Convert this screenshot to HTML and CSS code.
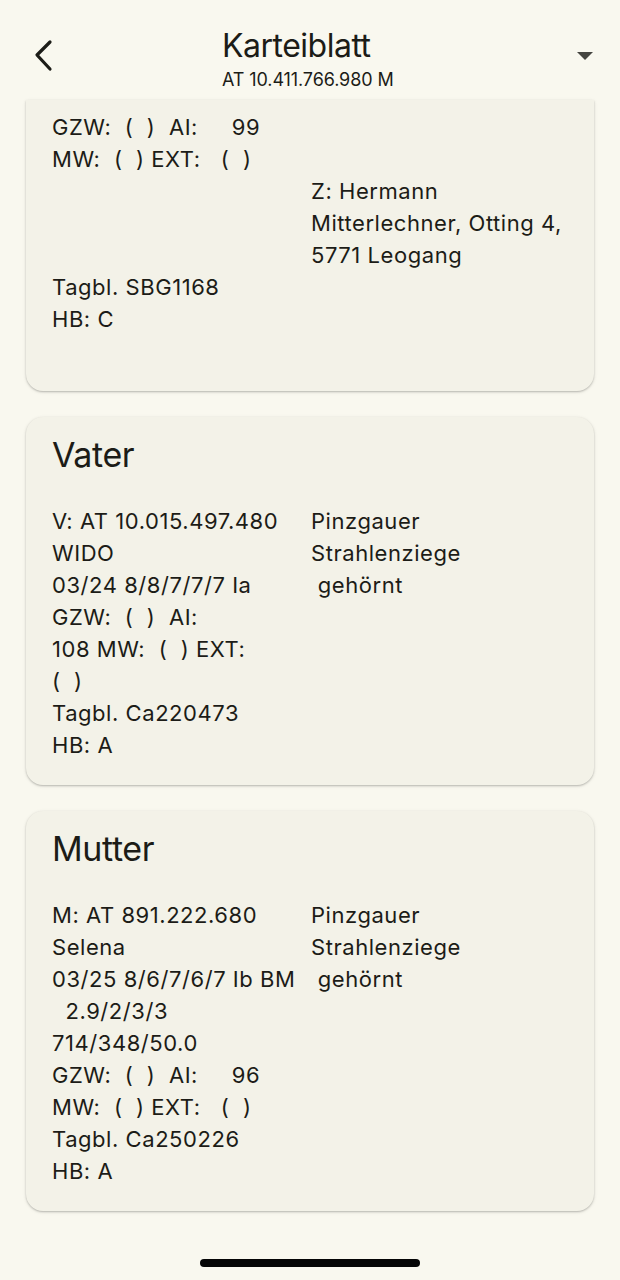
FILE: index.html
```html
<!DOCTYPE html>
<html lang="de">
<head>
<meta charset="utf-8">
<title>Karteiblatt</title>
<link rel="stylesheet" href="styles.css">
</head>
<body>
<div class="screen">
  <header class="appbar">
    <button class="back" aria-label="Zurück">
      <svg width="24" height="34" viewBox="0 0 24 34"><path d="M17 3 L4 16 L17 30" fill="none" stroke="#1c1c17" stroke-width="3.2" stroke-linecap="round" stroke-linejoin="round"/></svg>
    </button>
    <div class="titles">
      <div class="title">Karteiblatt</div>
      <div class="subtitle">AT 10.411.766.980 M</div>
    </div>
    <div class="dropdown" aria-label="Menü">
      <svg width="18" height="10" viewBox="0 0 18 10"><path d="M1 1 H17 L9 9 Z" fill="#454540"/></svg>
    </div>
  </header>

  <main class="list">
    <section class="card card-clipped">
      <div class="cols">
        <div class="col-left">
          <span class="ln">GZW:  (  )  AI:     99</span>
          <span class="ln">MW:  (  ) EXT:   (  )</span>
        </div>
        <div class="col-right"></div>
      </div>
      <div class="cols">
        <div class="col-left"></div>
        <div class="col-right">
          <span class="ln">Z: Hermann</span>
          <span class="ln">Mitterlechner, Otting 4,</span>
          <span class="ln">5771 Leogang</span>
        </div>
      </div>
      <span class="ln">Tagbl. SBG1168</span>
      <span class="ln">HB: C</span>
      <span class="ln"> </span>
    </section>

    <section class="card">
      <h2 class="card-title">Vater</h2>
      <div class="cols">
        <div class="col-left">
          <span class="ln">V: AT 10.015.497.480</span>
          <span class="ln">WIDO</span>
          <span class="ln">03/24 8/8/7/7/7 Ia</span>
          <span class="ln">GZW:  (  )  AI:</span>
          <span class="ln">108 MW:  (  ) EXT:</span>
          <span class="ln">(  )</span>
        </div>
        <div class="col-right">
          <span class="ln">Pinzgauer</span>
          <span class="ln">Strahlenziege</span>
          <span class="ln"> gehörnt</span>
        </div>
      </div>
      <span class="ln">Tagbl. Ca220473</span>
      <span class="ln">HB: A</span>
    </section>

    <section class="card">
      <h2 class="card-title">Mutter</h2>
      <div class="cols">
        <div class="col-left">
          <span class="ln">M: AT 891.222.680</span>
          <span class="ln">Selena</span>
          <span class="ln">03/25 8/6/7/6/7 Ib BM</span>
          <span class="ln">  2.9/2/3/3</span>
          <span class="ln">714/348/50.0</span>
          <span class="ln">GZW:  (  )  AI:     96</span>
          <span class="ln">MW:  (  ) EXT:   (  )</span>
        </div>
        <div class="col-right">
          <span class="ln">Pinzgauer</span>
          <span class="ln">Strahlenziege</span>
          <span class="ln"> gehörnt</span>
        </div>
      </div>
      <span class="ln">Tagbl. Ca250226</span>
      <span class="ln">HB: A</span>
    </section>
  </main>

  <div class="home-bar"><span class="home-indicator"></span></div>
</div>
</body>
</html>
```

FILE: styles.css
```css
* { box-sizing: border-box; }

html, body {
  margin: 0;
  padding: 0;
  background: #f9f8ef;
}

body {
  font-family: Inter, Roboto, "Noto Sans", sans-serif;
  color: #1c1c17;
}

.screen {
  width: 620px;
  height: 1280px;
  display: flex;
  flex-direction: column;
  overflow: hidden;
  background: #f9f8ef;
}

.appbar {
  height: 100px;
  flex: none;
  display: flex;
  align-items: flex-start;
  padding: 0 26px 0 30px;
  background: #f9f8ef;
}

.back {
  border: 0;
  background: none;
  padding: 0;
  margin-top: 39px;
  width: 30px;
  height: 34px;
  display: flex;
  align-items: center;
  justify-content: center;
}

.titles {
  flex: 1;
  display: flex;
  flex-direction: column;
  padding-left: 162px;
  padding-top: 26px;
}

.title {
  font-size: 32px;
  line-height: 40px;
  letter-spacing: -0.5px;
}

.subtitle {
  font-size: 18px;
  line-height: 24px;
  letter-spacing: -0.1px;
  margin-top: 2px;
}

.dropdown {
  margin-top: 51px;
  width: 18px;
  height: 10px;
  display: flex;
}

.list {
  flex: 1;
  display: flex;
  flex-direction: column;
  gap: 26px;
  padding: 0 26px;
}

.card {
  background: #f3f2e8;
  border-radius: 17px;
  padding: 16px 26px 24px;
  box-shadow: 0 1px 2px rgba(0, 0, 0, 0.22), 0 1px 4px rgba(0, 0, 0, 0.08);
  display: flex;
  flex-direction: column;
}

.card-clipped {
  border-top-left-radius: 0;
  border-top-right-radius: 0;
  padding-top: 11px;
}

.card-title {
  margin: 0 0 28px;
  font-size: 34px;
  line-height: 44px;
  font-weight: 400;
  letter-spacing: -0.4px;
}

.cols {
  display: grid;
  grid-template-columns: 259px 1fr;
}

.col-left, .col-right {
  display: flex;
  flex-direction: column;
}

.ln {
  display: block;
  white-space: pre;
  font-size: 22px;
  line-height: 32px;
  letter-spacing: 0.55px;
}

.home-bar {
  height: 34px;
  flex: none;
  display: flex;
  justify-content: center;
  align-items: flex-start;
  padding-top: 13px;
}

.home-indicator {
  width: 220px;
  height: 8px;
  border-radius: 4px;
  background: #050505;
}
```
